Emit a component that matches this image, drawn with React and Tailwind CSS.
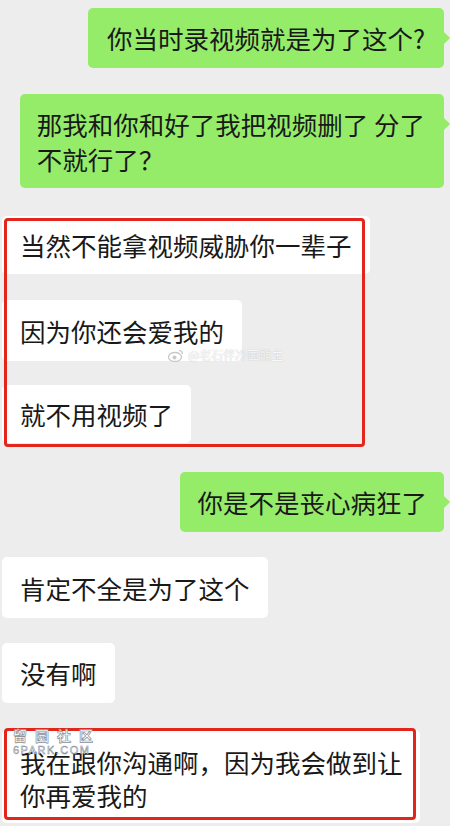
import React from "react";

function Green({ children, className = "", arrowTop = "top-[24px]" }) {
  return (
    <div className="flex justify-end pr-[6px]">
      <div className={"relative bg-[#95ec69] rounded-[5px] " + className}>
        {children}
        <span className={"absolute left-full w-0 h-0 border-y-[6px] border-y-transparent border-l-[6px] border-l-[#95ec69] " + arrowTop} />
      </div>
    </div>
  );
}

function White({ children, className = "" }) {
  return (
    <div className="flex justify-start pl-[2px]">
      <div className={"relative bg-white rounded-[5px] px-[18px] " + className}>
        {children}
      </div>
    </div>
  );
}

export default function App() {
  return (
    <div className="relative w-[450px] h-[826px] overflow-hidden bg-[#ededed] text-[#191919] text-[25.5px] font-['Noto_Sans_CJK_SC','Noto_Sans',sans-serif]">
      <div className="flex flex-col pt-[8px]">
        <Green className="px-[19px] py-[12px] leading-[36px]">你当时录视频就是为了这个?</Green>

        <div className="mt-[26px]">
          <Green className="pl-[17px] pr-[19px] py-[12px] leading-[35px]">
            那我和你和好了我把视频删了 分了
            <br />
            不就行了？
          </Green>
        </div>

        <div className="relative mt-[28px]">
          <White className="py-[11px] leading-[36px]">当然不能拿视频威胁你一辈子</White>
          <div className="mt-[26px]">
            <White className="py-[12px] leading-[37px]">因为你还会爱我的</White>
          </div>
          <div className="mt-[24px]">
            <White className="py-[11px] leading-[36px]">就不用视频了</White>
          </div>
          <div className="absolute left-[4px] top-[2px] bottom-[-4px] w-[361px] border-[3.5px] border-[#e3261b] rounded-[4px]" />
          <div className="absolute left-[168px] top-[132px] flex items-center gap-[4px] text-[12px] leading-[14px] text-white/90 [text-shadow:0_0_1px_rgba(0,0,0,0.3)]">
            <svg width="16" height="13" viewBox="0 0 16 13">
              <ellipse cx="7" cy="8" rx="6.5" ry="4.5" fill="none" stroke="#c8c8c8" strokeWidth="1.3" />
              <circle cx="6.5" cy="8.5" r="2" fill="#c8c8c8" />
              <path d="M11 1.5 A3.5 3.5 0 0 1 14.5 5" fill="none" stroke="#c8c8c8" strokeWidth="1.2" />
            </svg>
            <span>@老石伴冷面熊主</span>
          </div>
        </div>

        <div className="mt-[29px]">
          <Green className="px-[17px] py-[12px] leading-[36px]">你是不是丧心病狂了</Green>
        </div>

        <div className="mt-[25px]">
          <White className="py-[12px] leading-[37px]">肯定不全是为了这个</White>
        </div>

        <div className="mt-[25px]">
          <White className="py-[12px] leading-[36px]">没有啊</White>
        </div>

        <div className="relative mt-[27px]">
          <White className="w-[418px] pr-[12px] pt-[15px] pb-[12px] leading-[33px]">
            我在跟你沟通啊，因为我会做到让你再爱我的
          </White>
          <div className="absolute left-[4px] top-[-2px] w-[412px] h-[92px] border-[3.5px] border-[#e3261b] rounded-[4px]" />
          <div className="absolute left-[13px] top-[-2px] flex flex-col">
            <div className="flex gap-[8px] text-[14px] leading-[15px] font-bold text-white [-webkit-text-stroke:0.7px_#8a8f98]">
              <span>留</span>
              <span>园</span>
              <span>社</span>
              <span>区</span>
            </div>
            <div className="mt-[2px] text-[11px] leading-[11px] tracking-[1.5px] text-white [-webkit-text-stroke:0.5px_#7d8694] font-['Liberation_Sans',sans-serif]">
              6PARK.COM
            </div>
          </div>
        </div>
      </div>
    </div>
  );
}
